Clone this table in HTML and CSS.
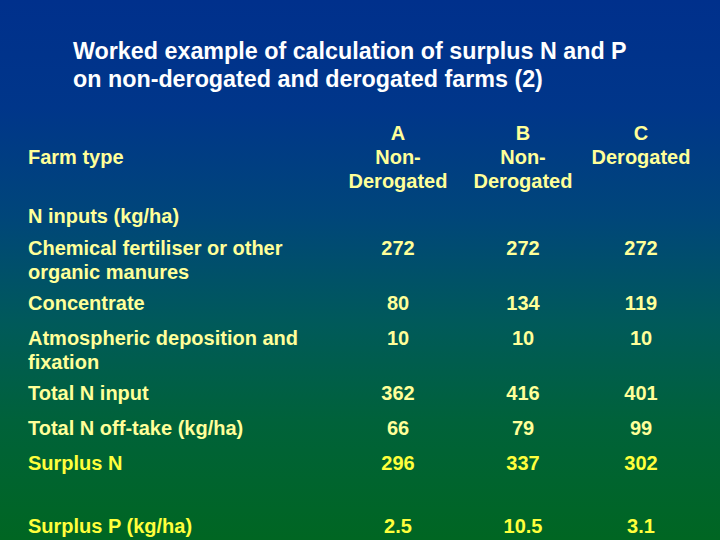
FILE: index.html
```html
<!DOCTYPE html>
<html>
<head>
<meta charset="utf-8">
<link rel="stylesheet" href="styles.css">
</head>
<body>
<div class="slide">
  <h1 class="title">Worked example of calculation of surplus N and P<br>on non-derogated and derogated farms (2)</h1>
  <table class="data">
    <colgroup>
      <col class="c-label"><col class="c-a"><col class="c-b"><col class="c-c">
    </colgroup>
    <tr class="r-head">
      <td class="lbl mid">Farm type</td>
      <td>A<br>Non-<br>Derogated</td>
      <td>B<br>Non-<br>Derogated</td>
      <td>C<br>Derogated</td>
    </tr>
    <tr class="r-sec">
      <td class="lbl">N inputs (kg/ha)</td><td></td><td></td><td></td>
    </tr>
    <tr class="r-two">
      <td class="lbl">Chemical fertiliser or other<br>organic manures</td><td>272</td><td>272</td><td>272</td>
    </tr>
    <tr class="r-one">
      <td class="lbl">Concentrate</td><td>80</td><td>134</td><td>119</td>
    </tr>
    <tr class="r-two">
      <td class="lbl">Atmospheric deposition and<br>fixation</td><td>10</td><td>10</td><td>10</td>
    </tr>
    <tr class="r-one">
      <td class="lbl">Total N input</td><td>362</td><td>416</td><td>401</td>
    </tr>
    <tr class="r-one">
      <td class="lbl">Total N off-take (kg/ha)</td><td>66</td><td>79</td><td>99</td>
    </tr>
    <tr class="r-gap hi">
      <td class="lbl">Surplus N</td><td>296</td><td>337</td><td>302</td>
    </tr>
    <tr class="r-last hi">
      <td class="lbl">Surplus P (kg/ha)</td><td>2.5</td><td>10.5</td><td>3.1</td>
    </tr>
  </table>
</div>
</body>
</html>
```

FILE: styles.css
```css
html, body {
  margin: 0;
  padding: 0;
}
body {
  width: 720px;
  height: 540px;
  overflow: hidden;
  font-family: "Liberation Sans", Arial, sans-serif;
  font-weight: bold;
}
.slide {
  width: 720px;
  height: 540px;
  box-sizing: border-box;
  padding: 37px 0 0 28px;
  background: linear-gradient(to bottom, #00308c 0%, #00368a 20%, #00467a 40%, #005a5a 60%, #00623a 78%, #006622 100%);
}
.title {
  margin: 0 0 0 45px;
  font-size: 23.3px;
  line-height: 28px;
  font-weight: bold;
  color: #ffffff;
  white-space: nowrap;
}
.data {
  margin-top: 28px;
  border-collapse: collapse;
  border-spacing: 0;
  table-layout: fixed;
  width: 668px;
  font-size: 20px;
  line-height: 24px;
  color: #ffff99;
}
.c-label { width: 308px; }
.c-a { width: 124px; }
.c-b { width: 126px; }
.c-c { width: 110px; }
.data td {
  padding: 0;
  vertical-align: top;
  text-align: center;
  white-space: nowrap;
}
.data td.lbl {
  text-align: left;
}
.data td.mid {
  vertical-align: middle;
  padding-bottom: 11px;
}
.r-head td { height: 72px; padding-bottom: 11px; }
.r-sec td { height: 24px; padding-bottom: 8px; }
.r-two td { height: 48px; padding-bottom: 7px; }
.r-one td { height: 24px; padding-bottom: 11px; }
.r-gap td { height: 24px; padding-bottom: 39px; }
.r-last td { height: 24px; }
.hi td { color: #ffff3c; }
```
